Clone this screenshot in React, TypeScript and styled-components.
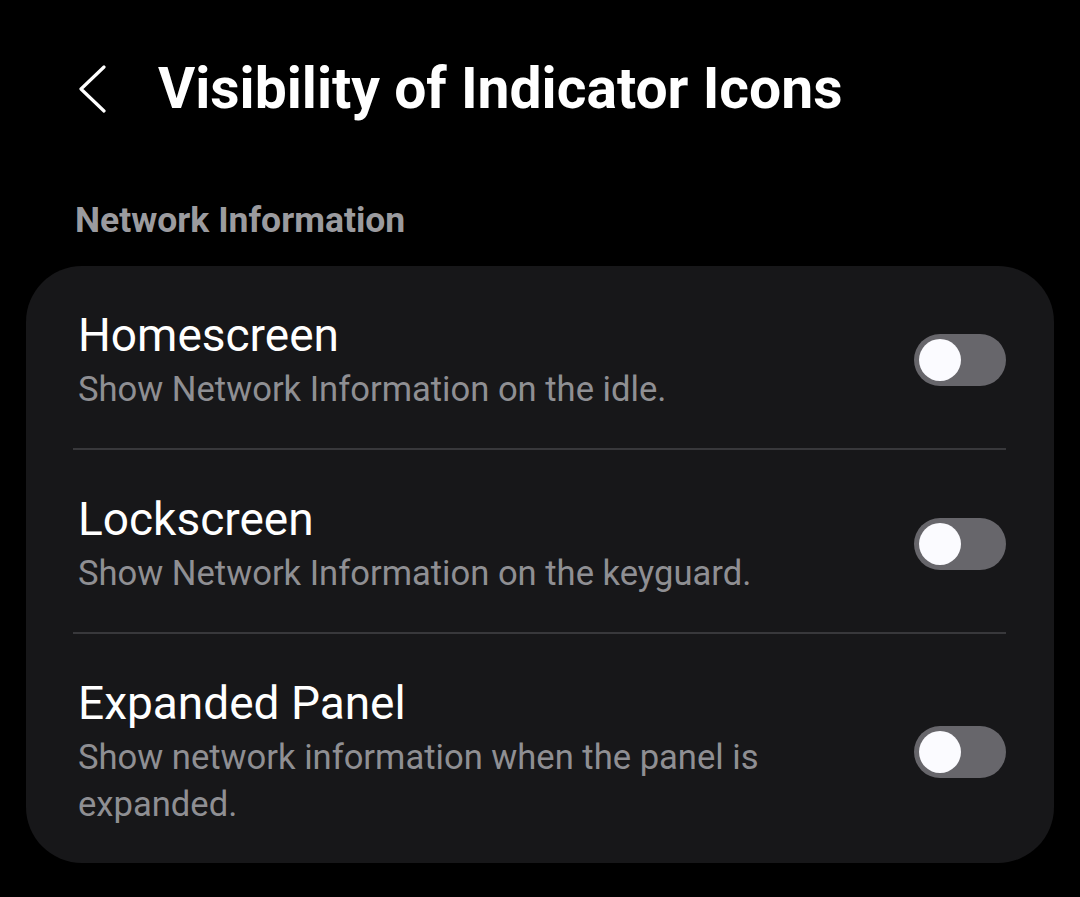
import styled, {createGlobalStyle} from "styled-components";

const GlobalStyle = createGlobalStyle`
  html, body {
    margin: 0;
    padding: 0;
    background: #000;
  }
  body {
    font-family: "Roboto", "Inter", sans-serif;
    color: #fff;
  }
`;

const Page = styled.div`
  width: 1080px;
  height: 897px;
  background: #000;
  overflow: hidden;
`;

const Header = styled.header`
  display: flex;
  align-items: center;
  height: 180px;
  padding: 0 0 2px 78px;
  box-sizing: border-box;
`;

const BackButton = styled.button`
  width: 30px;
  height: 48px;
  padding: 0;
  margin-right: 50px;
  border: none;
  background: none;
  display: flex;
  align-items: center;
`;

const Title = styled.h1`
  margin: 0;
  font-size: 57px;
  line-height: 68px;
  font-weight: 700;
  color: #fff;
`;

const SectionLabel = styled.div`
  padding: 19px 0 0 75px;
  height: 86px;
  box-sizing: border-box;
  font-size: 35.5px;
  line-height: 42px;
  font-weight: 700;
  color: #9b9b9f;
`;

const Card = styled.div`
  margin: 0 26px;
  background: #171719;
  border-radius: 56px;
  padding: 0 48px 0 47px;
`;

const Row = styled.div<{ $last?: boolean }>`
  display: flex;
  align-items: center;
  padding: 41px 0 35px;
  border-bottom: ${props => props.$last ? "none" : "2px solid #38383b"};
`;

const Texts = styled.div`
  flex: 1;
  padding-left: 5px;
  padding-right: 60px;
`;

const RowTitle = styled.div`
  font-size: 46px;
  line-height: 56px;
  color: #fff;
`;

const RowSub = styled.div`
  margin-top: 3px;
  font-size: 34.6px;
  line-height: 47px;
  color: #8f8f93;
`;

const Switch = styled.div`
  width: 92px;
  height: 52px;
  border-radius: 26px;
  background: #67666b;
  position: relative;
  flex-shrink: 0;
`;

const Knob = styled.span`
  position: absolute;
  left: 5px;
  top: 5px;
  width: 42px;
  height: 42px;
  border-radius: 50%;
  background: #fbfbff;
`;

interface ISetting {
  title: string;
  sub: string;
}

const settings: ISetting[] = [
  {title: "Homescreen", sub: "Show Network Information on the idle."},
  {title: "Lockscreen", sub: "Show Network Information on the keyguard."},
  {title: "Expanded Panel", sub: "Show network information when the panel is expanded."},
];

function App() {
  return (
    <Page>
      <GlobalStyle/>
      <Header>
        <BackButton>
          <svg width="30" height="48" viewBox="0 0 30 48" fill="none">
            <path d="M26 2 L3 24 L26 46" stroke="#fff" strokeWidth="3.2" strokeLinecap="round" strokeLinejoin="round"/>
          </svg>
        </BackButton>
        <Title>Visibility of Indicator Icons</Title>
      </Header>
      <SectionLabel>Network Information</SectionLabel>
      <Card>
        {settings.map((s, i) => (
          <Row key={s.title} $last={i === settings.length - 1}>
            <Texts>
              <RowTitle>{s.title}</RowTitle>
              <RowSub>{s.sub}</RowSub>
            </Texts>
            <Switch><Knob/></Switch>
          </Row>
        ))}
      </Card>
    </Page>
  );
}

export default App;
